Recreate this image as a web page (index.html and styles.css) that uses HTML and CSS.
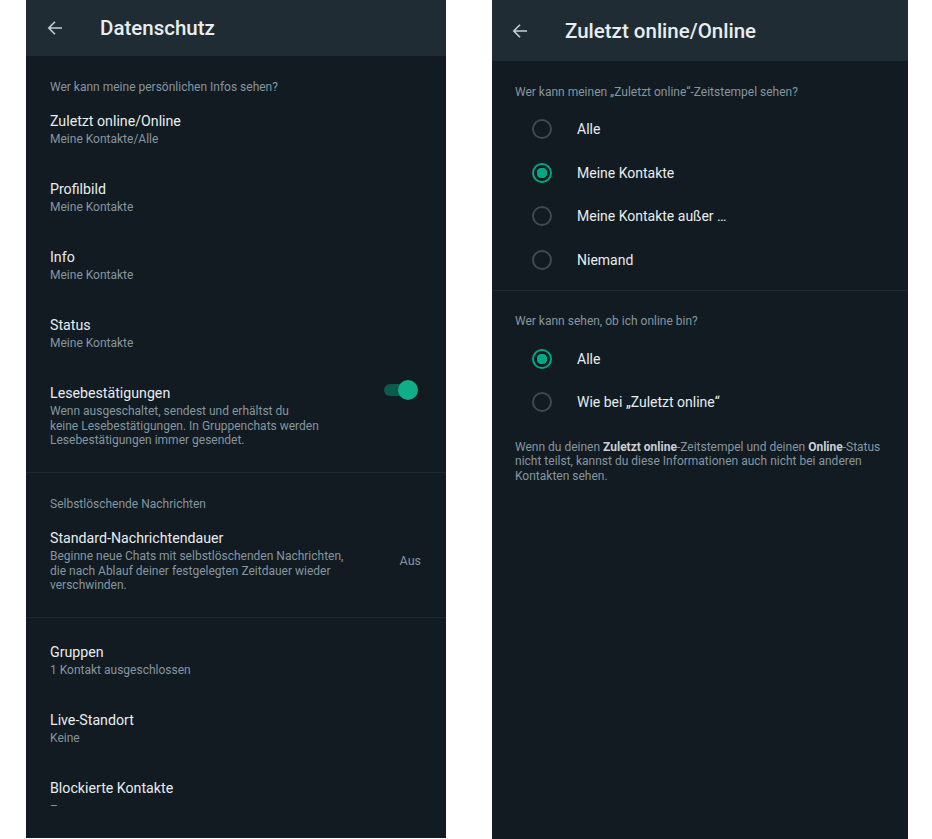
FILE: index.html
```html
<!DOCTYPE html>
<html lang="de">
<head>
  <meta charset="UTF-8" />
  <meta name="viewport" content="width=device-width, initial-scale=1.0" />
  <title>Datenschutz</title>
  <link rel="stylesheet" href="styles.css">
</head>
<body>
  <div class="screens">

    <!-- Datenschutz -->
    <div class="phone phone-left">
      <header class="appbar">
        <svg class="back" width="16" height="16" viewBox="0 0 16 16"><path d="M15 8H1.8M8 1.8L1.8 8L8 14.2" /></svg>
        <h1>Datenschutz</h1>
      </header>

      <section class="group">
        <div class="label">Wer kann meine persönlichen Infos sehen?</div>
        <div class="item">
          <div class="text">
            <div class="title">Zuletzt online/Online</div>
            <div class="sub">Meine Kontakte/Alle</div>
          </div>
        </div>
        <div class="item">
          <div class="text">
            <div class="title">Profilbild</div>
            <div class="sub">Meine Kontakte</div>
          </div>
        </div>
        <div class="item">
          <div class="text">
            <div class="title">Info</div>
            <div class="sub">Meine Kontakte</div>
          </div>
        </div>
        <div class="item">
          <div class="text">
            <div class="title">Status</div>
            <div class="sub">Meine Kontakte</div>
          </div>
        </div>
        <div class="item item-top">
          <div class="text">
            <div class="title">Lesebestätigungen</div>
            <div class="sub">Wenn ausgeschaltet, sendest und erhältst du<br>keine Lesebestätigungen. In Gruppenchats werden<br>Lesebestätigungen immer gesendet.</div>
          </div>
          <div class="switch"><span class="knob"></span></div>
        </div>
      </section>

      <section class="group">
        <div class="label">Selbstlöschende Nachrichten</div>
        <div class="item">
          <div class="text">
            <div class="title">Standard-Nachrichtendauer</div>
            <div class="sub">Beginne neue Chats mit selbstlöschenden Nachrichten,<br>die nach Ablauf deiner festgelegten Zeitdauer wieder<br>verschwinden.</div>
          </div>
          <div class="value">Aus</div>
        </div>
      </section>

      <section class="group group-plain">
        <div class="item">
          <div class="text">
            <div class="title">Gruppen</div>
            <div class="sub">1 Kontakt ausgeschlossen</div>
          </div>
        </div>
        <div class="item">
          <div class="text">
            <div class="title">Live-Standort</div>
            <div class="sub">Keine</div>
          </div>
        </div>
        <div class="item">
          <div class="text">
            <div class="title">Blockierte Kontakte</div>
            <div class="sub">–</div>
          </div>
        </div>
      </section>
    </div>

    <!-- Zuletzt online/Online -->
    <div class="phone phone-right">
      <header class="appbar appbar-tall">
        <svg class="back" width="16" height="16" viewBox="0 0 16 16"><path d="M15 8H1.8M8 1.8L1.8 8L8 14.2" /></svg>
        <h1>Zuletzt online/Online</h1>
      </header>

      <section class="group">
        <div class="label">Wer kann meinen „Zuletzt online“-Zeitstempel sehen?</div>
        <div class="radios">
          <div class="radio"><span class="circle"></span>Alle</div>
          <div class="radio"><span class="circle checked"></span>Meine Kontakte</div>
          <div class="radio"><span class="circle"></span>Meine Kontakte außer …</div>
          <div class="radio"><span class="circle"></span>Niemand</div>
        </div>
      </section>

      <section class="group group-last">
        <div class="label">Wer kann sehen, ob ich online bin?</div>
        <div class="radios">
          <div class="radio"><span class="circle checked"></span>Alle</div>
          <div class="radio"><span class="circle"></span>Wie bei „Zuletzt online“</div>
        </div>
        <p class="note">Wenn du deinen <b>Zuletzt online</b>-Zeitstempel und deinen <b>Online</b>-Status<br>nicht teilst, kannst du diese Informationen auch nicht bei anderen<br>Kontakten sehen.</p>
      </section>
    </div>

  </div>
</body>
</html>
```

FILE: styles.css
```css
body {
  margin: 0;
  background-color: #ffffff;
  font-family: Roboto, "Noto Sans", Arial, sans-serif;
}

.screens {
  display: flex;
  gap: 46px;
  padding-left: 26px;
}

.phone {
  background-color: #111b21;
  color: #e9edef;
  overflow: hidden;
}

.phone-left {
  width: 420px;
  height: 838px;
}

.phone-right {
  width: 416px;
  height: 839px;
}

/* app bar */
.appbar {
  display: flex;
  align-items: center;
  height: 56px;
  padding-left: 21px;
  background-color: #1f2c33;
}

.appbar-tall {
  height: 61px;
  padding-left: 20px;
}

.back {
  flex: none;
}

.back path {
  fill: none;
  stroke: #c7cfd4;
  stroke-width: 1.6;
}

.appbar h1 {
  margin: 0 0 0 37px;
  font-size: 20.5px;
  font-weight: 500;
  color: #e9edef;
}

/* groups */
.group {
  padding-bottom: 8px;
  border-bottom: 1px solid #1e2a31;
}

.group-plain {
  padding-top: 8px;
  border-bottom: none;
}

.group-last {
  border-bottom: none;
}

.label {
  padding: 23px 24px 0;
  font-size: 12px;
  line-height: 16px;
  color: #8696a0;
}

.phone-right .label {
  padding: 22.5px 23px 0;
}

/* list items */
.item {
  display: flex;
  align-items: center;
  padding: 17px 24px 16.5px;
}

.item-top {
  align-items: flex-start;
}

.text {
  flex: 1;
}

.title {
  font-size: 14.2px;
  line-height: 18px;
  color: #e9edef;
}

.sub {
  margin-top: 2px;
  font-size: 12px;
  line-height: 14.5px;
  color: #8696a0;
}

.value {
  font-size: 12.5px;
  color: #8696a0;
  padding-right: 1px;
}

/* toggle */
.switch {
  position: relative;
  width: 34px;
  height: 20px;
  margin: -4px 4px 0 0;
}

.switch::before {
  content: "";
  position: absolute;
  left: 0;
  top: 4px;
  width: 30px;
  height: 12px;
  border-radius: 6px;
  background-color: #0b5a4b;
}

.knob {
  position: absolute;
  right: 0;
  top: 0;
  width: 20px;
  height: 20px;
  border-radius: 50%;
  background-color: #0fae89;
}

/* radio buttons */
.radios {
  margin-top: 8px;
}

.radio {
  display: flex;
  align-items: center;
  height: 43.5px;
  padding-left: 40px;
  font-size: 14px;
  color: #e9edef;
}

.circle {
  flex: none;
  box-sizing: border-box;
  width: 20px;
  height: 20px;
  margin-right: 25px;
  border: 2px solid #3d4a52;
  border-radius: 50%;
}

.circle.checked {
  border-color: #00a884;
  background: radial-gradient(circle, #00a884 0 5px, transparent 5.5px);
}

.note {
  margin: 15.5px 23px 0;
  font-size: 12px;
  line-height: 14.5px;
  color: #8696a0;
}

.note b {
  font-weight: 700;
  color: #c8d0d5;
}
```
